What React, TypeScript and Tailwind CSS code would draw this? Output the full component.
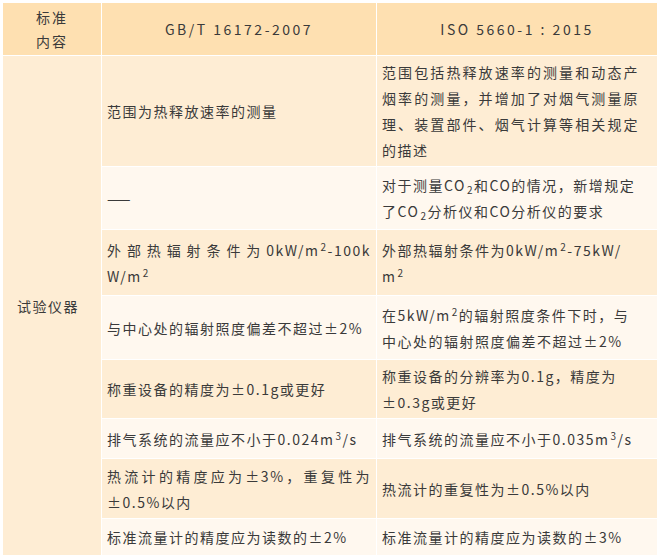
import React from 'react';

type Cell = { lines: React.ReactNode[]; full?: number[] };

const sup = (s: string) => <sup className="text-[10px] ml-[1px]">{s}</sup>;
const sub = (s: string) => <sub className="text-[10px] ml-[1px]">{s}</sub>;

const rows: { h: string; tone: 'dark' | 'light'; a: Cell; b: Cell }[] = [
    {
        h: 'h-[110px]',
        tone: 'dark',
        a: { lines: ['范围为热释放速率的测量'] },
        b: {
            lines: ['范围包括热释放速率的测量和动态产', '烟率的测量，并增加了对烟气测量原', '理、装置部件、烟气计算等相关规定', '的描述'],
            full: [0, 1, 2],
        },
    },
    {
        h: 'h-[62px]',
        tone: 'light',
        a: { lines: [<span className="tracking-[3px]">——</span>] },
        b: {
            lines: [
                <>对于测量CO{sub('2')}和CO的情况，新增规定</>,
                <>了CO{sub('2')}分析仪和CO分析仪的要求</>,
            ],
        },
    },
    {
        h: 'h-[65px]',
        tone: 'dark',
        a: { lines: [<>外部热辐射条件为0kW/m{sup('2')}-100k</>, <>W/m{sup('2')}</>], full: [0] },
        b: { lines: [<>外部热辐射条件为0kW/m{sup('2')}-75kW/</>, <>m{sup('2')}</>] },
    },
    {
        h: 'h-[63px]',
        tone: 'light',
        a: { lines: ['与中心处的辐射照度偏差不超过±2%'] },
        b: { lines: [<>在5kW/m{sup('2')}的辐射照度条件下时，与</>, '中心处的辐射照度偏差不超过±2%'] },
    },
    {
        h: 'h-[58px]',
        tone: 'dark',
        a: { lines: ['称重设备的精度为±0.1g或更好'] },
        b: { lines: ['称重设备的分辨率为0.1g，精度为', '±0.3g或更好'] },
    },
    {
        h: 'h-[39px]',
        tone: 'light',
        a: { lines: [<>排气系统的流量应不小于0.024m{sup('3')}/s</>] },
        b: { lines: [<>排气系统的流量应不小于0.035m{sup('3')}/s</>] },
    },
    {
        h: 'h-[59px]',
        tone: 'dark',
        a: { lines: ['热流计的精度应为±3%，重复性为', '±0.5%以内'], full: [0] },
        b: { lines: ['热流计的重复性为±0.5%以内'] },
    },
    {
        h: 'h-[36px]',
        tone: 'light',
        a: { lines: ['标准流量计的精度应为读数的±2%'] },
        b: { lines: ['标准流量计的精度应为读数的±3%'] },
    },
];

const Lines: React.FC<{ cell: Cell }> = ({ cell }) => (
    <>
        {cell.lines.map((l, i) => (
            <div
                key={i}
                className={cell.full?.includes(i) ? 'text-justify [text-align-last:justify]' : 'text-left'}
            >
                {l}
            </div>
        ))}
    </>
);

export default function App() {
    return (
        <div
            className="bg-white w-[661px] h-[560px] pt-[2px] pl-[2px] text-[#3a3a3a] text-[14px] leading-[26px] tracking-[1.5px]"
            style={{ fontFamily: '"Noto Sans CJK SC", "Noto Sans", sans-serif' }}
        >
            <table className="table-fixed border-separate border-spacing-[1px] w-[656px]">
                <colgroup>
                    <col className="w-[98px]" />
                    <col className="w-[274px]" />
                    <col className="w-[280px]" />
                </colgroup>
                <thead>
                    <tr className="h-[52px] bg-[#fee0b1]">
                        <th className="font-normal text-center align-middle leading-[24px] tracking-[2px] p-0">
                            标准
                            <br />
                            内容
                        </th>
                        <th className="font-normal text-center align-middle tracking-[2.5px] p-0">GB/T 16172-2007</th>
                        <th className="font-normal text-center align-middle tracking-[2.5px] p-0">ISO 5660-1 : 2015</th>
                    </tr>
                </thead>
                <tbody>
                    {rows.map((r, i) => {
                        const bg = r.tone === 'dark' ? 'bg-[#feedd4]' : 'bg-[#fff8ef]';
                        return (
                            <tr key={i} className={r.h}>
                                {i === 0 && (
                                    <td rowSpan={8} className="bg-[#feedd4] align-middle text-left px-[14px] p-0">
                                        试验仪器
                                    </td>
                                )}
                                <td className={`${bg} align-middle px-[5px] py-0`}>
                                    <Lines cell={r.a} />
                                </td>
                                <td className={`${bg} align-middle pl-[5px] pr-[18px] py-0`}>
                                    <Lines cell={r.b} />
                                </td>
                            </tr>
                        );
                    })}
                </tbody>
            </table>
        </div>
    );
}
